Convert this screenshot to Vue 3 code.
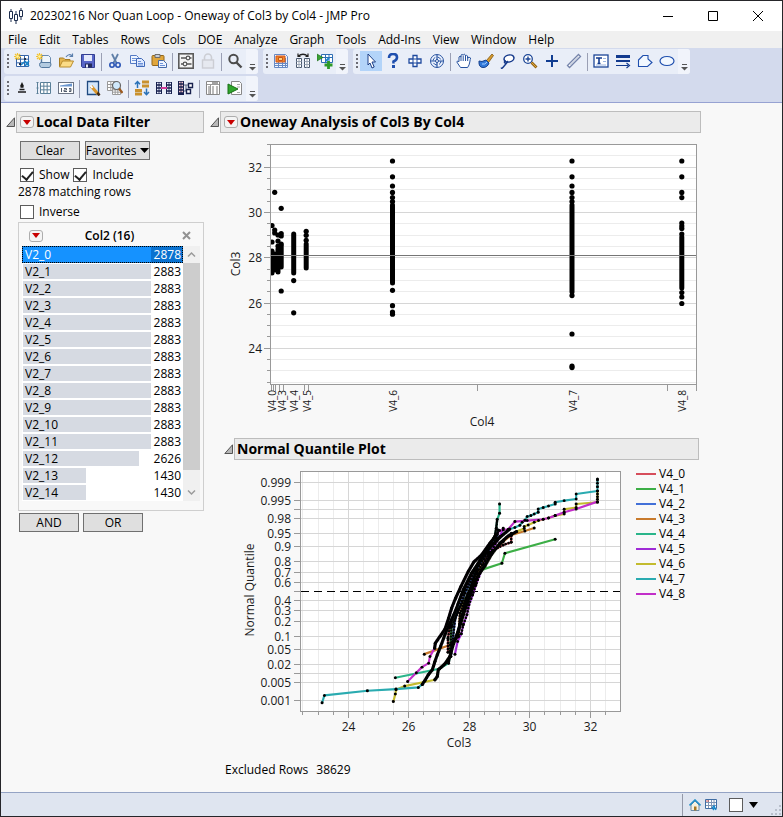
<script setup>
import { ref } from 'vue'

const menus = ['File', 'Edit', 'Tables', 'Rows', 'Cols', 'DOE', 'Analyze', 'Graph', 'Tools', 'Add-Ins', 'View', 'Window', 'Help']

const grid = (x, y, w, h, c) =>
  `<path d="M${x} ${y}h${w}v${h}h-${w}z" fill="#fff" stroke="${c}"/><path d="M${x} ${y + h / 3}h${w}M${x} ${y + (2 * h) / 3}h${w}M${x + w / 3} ${y}v${h}M${x + (2 * w) / 3} ${y}v${h}" stroke="${c}" fill="none"/>`
const spark = '<path d="M3.500 0v7M0 3.500h7M1 1l5 5M6 1l-5 5" stroke="#f2c230" stroke-width="1.200"/><circle cx="3.500" cy="3.500" r="1.300" fill="#fff3a0"/>'

const icons = {
  newTable: grid(2.5, 2.5, 12, 11, '#3565a8') + '<path d="M11 8l4 5M15 8l-4 5M7 12l3-3" stroke="#1583c9" stroke-width="1.600"/><path d="M5 10h2v2H5zM10 5h2v2h-2z" fill="#20304a"/>' + spark,
  newScript: '<path d="M5.500 2.500h7l2 2v8h-9z" fill="#eef5fb" stroke="#6a8cb0"/><path d="M3.500 11.500q0-2 2-2h9q1.500 2.500-1 5H5.500q-2-.5-2-3z" fill="#b3cbe0" stroke="#54799f"/><path d="M5.500 3v7" stroke="#54799f" stroke-width="1.400"/>' + spark,
  open: '<path d="M1.500 13.500V5h4l1.500 1.500h5v7z" fill="#e5b650" stroke="#a77e25"/><path d="M1.500 14l3-6h11l-3 6z" fill="#fbdc86" stroke="#b88c2c"/><path d="M8 4q3-4 6-1M14.500 .5v3h-3" fill="none" stroke="#5a7fae" stroke-width="1.200"/>',
  save: '<path d="M1.500 1.500h13v13h-12l-1-1z" fill="#5866c8" stroke="#343f92"/><path d="M4 2h8v6H4z" fill="#e4e9fb"/><path d="M5 10.500h7v4H5z" fill="#222a5c"/><path d="M6 11.500h2v3H6z" fill="#e8ebfa"/>',
  cut: '<path d="M5 1l4.500 9M11 1L6.500 10" stroke="#5f7fa8" stroke-width="1.800"/><circle cx="5" cy="12" r="2.200" fill="none" stroke="#2a55b5" stroke-width="1.600"/><circle cx="11" cy="12" r="2.200" fill="none" stroke="#2a55b5" stroke-width="1.600"/>',
  copy: '<path d="M1.500 2.500h6l2 2v6h-8z" fill="#eef5ff" stroke="#5379c4"/><path d="M3 5.500h4M3 7.500h4" stroke="#6d92d8"/><path d="M7.500 5.500h5l3 3v5h-8z" fill="#dfeaff" stroke="#3f68b8"/><path d="M9 8.500h3M9 10.500h5M9 12h5" stroke="#6d92d8"/>',
  paste: '<rect x="1" y="2.500" width="12" height="10" rx="1" fill="#e0a63c" stroke="#93661a"/><path d="M4 1.500h5v3H4z" fill="#c9ced8" stroke="#6d6d6d"/><path d="M7.500 7.500h5l3 3v4h-8z" fill="#eef4ff" stroke="#456aa8"/><path d="M9 10.500h3M9 12.500h5" stroke="#6d92d8"/>',
  prefs: '<rect x=".8" y=".8" width="14.400" height="14.400" fill="#f4f4f4" stroke="#5b5b5b" stroke-width="1.600"/><path d="M3 5h5M12 5h1.500M3 11h2M9 11h4.500" stroke="#555" stroke-width="1.400"/><circle cx="10" cy="5" r="1.800" fill="none" stroke="#555" stroke-width="1.200"/><circle cx="7" cy="11" r="1.800" fill="none" stroke="#555" stroke-width="1.200"/>',
  lock: '<path d="M4.500 7V4.500a3.500 3.500 0 0 1 7 0V7" fill="none" stroke="#ccced4" stroke-width="1.600"/><rect x="2.500" y="7" width="11" height="8" fill="#e6e9f0" stroke="#ccced4" stroke-width="1.400"/>',
  search: '<circle cx="6.500" cy="6" r="4.200" fill="none" stroke="#4c4c4c" stroke-width="2"/><path d="M9.500 9.500l5 5" stroke="#4c4c4c" stroke-width="2.400"/>',
  dist: '<path d="M1.500 1.500h11l2 2v11h-13z" fill="#f2f6fd" stroke="#6689c4"/><path d="M2 10.500h12M2 12.500h12M5.500 9v5M9.500 9v5M12.500 5v9" stroke="#6689c4"/><path d="M3 3h9v6H3z" fill="#f08a24" stroke="#d3541d"/><path d="M5.500 4.500h4v3h-4z" fill="#fdd27a" stroke="#c8501c"/>',
  compare: '<path d="M1.500 5.500h5v9h-5zM9.500 5.500h5v9h-5z" fill="#fff" stroke="#49586e"/><path d="M1.500 8.500h5M1.500 11.500h5M4 6v9M9.500 8.500h5M9.500 11.500h5M12 6v9" stroke="#9aa5b5"/><path d="M3 3.500Q8-1 13 3.500M3 .5v3h2.500M13 .5v3h-2.500" stroke="#222" stroke-width="1.200" fill="none"/>',
  addRun: '<path d="M4.500 1.500h11v8h-11z" fill="#fff" stroke="#2f6fb5"/><path d="M5 4.500h10M8.500 2v7M12 2v7" stroke="#2f6fb5"/><path d="M9 8l3-3" stroke="#1a86d0" stroke-width="2"/><path d="M0 1l6 3.500L0 8z" fill="#3aa035" stroke="#1f6d1b" stroke-width=".6"/><path d="M11.500 8v8M7.500 12h8" stroke="#2d9a27" stroke-width="2.800"/>',
  pointer: '<path d="M5 1l7.500 8H9l2.200 5-2.200 1-2-5L5 12z" fill="#fff" stroke="#1c3f86"/>',
  help: '<path d="M4 5q0-4 4-4t4 3.500Q12 7 8.500 8.500v2" fill="none" stroke="#1f4fae" stroke-width="2.600"/><rect x="7" y="12" width="3" height="3" fill="#1f4fae"/>',
  cross: '<path d="M6 2.500h4V6h4v4h-4v3.500H6V10H2V6h4z" fill="#fff" stroke="#1f4a9e" stroke-width="1.300"/><path d="M6 6h4v4H6z" fill="#fff" stroke="#1f4a9e"/>',
  target: '<circle cx="8" cy="8" r="6.500" fill="#eef4ff" stroke="#27529f"/><circle cx="8" cy="8" r="4" fill="none" stroke="#27529f" stroke-dasharray="4 2.300"/><path d="M8 2v12M2 8h12" stroke="#27529f" stroke-width="1.200"/><circle cx="8" cy="8" r="1.500" fill="#fff" stroke="#27529f"/>',
  hand: '<path d="M4.500 14.500L.8 9q.4-1.800 2.200-.4V4q1-1.500 2 0V2.200q1-1.500 2.200 0V2q1-1.600 2.200 0v1q1-1.300 2.200 0v2q1.600-1.300 3 0-.4 1-.8 4t-2.200 5.500z" fill="#fff" stroke="#27529f"/><path d="M5 3.500V8M7.200 3v5M9.500 3v5M11.700 4v4" stroke="#27529f"/>',
  brush: '<path d="M8 8l6-7 1.500 1.500-5 7z" fill="#d79b2e" stroke="#7f5712" stroke-width=".8"/><path d="M1 8l3 .5L8 7l3 3q-1.500 4.500-6 4.500T1 8z" fill="#2f77d8" stroke="#153f8c"/><path d="M4 11q3 1 5-2" stroke="#a9d0ff" fill="none"/>',
  lasso: '<ellipse cx="9" cy="5.500" rx="5" ry="3.500" transform="rotate(-14 9 5.500)" fill="#fff" stroke="#163a8c" stroke-width="1.500"/><path d="M6 8q-2 0-1.500 1.500T7 9t-2 3-3.500 2.500" fill="none" stroke="#163a8c" stroke-width="1.400"/>',
  magnify: '<circle cx="6" cy="6" r="4.300" fill="#fff" stroke="#1c4697" stroke-width="1.300"/><path d="M6 3.500v5M3.500 6h5" stroke="#1c4697" stroke-width="1.400"/><path d="M9.500 9.500l5 5" stroke="#966514" stroke-width="2.800"/><path d="M9.500 9.500l4.500 4.500" stroke="#e0aa3e"/>',
  plus: '<path d="M8 2v12M2 8h12" stroke="#113d91" stroke-width="2"/>',
  ruler: '<path d="M1.500 12.500L12.500 1.500l2 2L3.500 14.500z" fill="#fff" stroke="#7584ab" stroke-width="1.300"/><path d="M4.500 12L13 3.500" stroke="#a4b0cc"/>',
  textBox: '<rect x="1" y="2" width="14" height="12" fill="#fff" stroke="#1c4697" stroke-width="1.300"/><path d="M3 5h6M6 5v5.500M4.500 10.500h3" stroke="#123a8e" stroke-width="1.600"/><path d="M10 5.500h3M10 8.500h3M3 12h10" stroke="#9bb5e0"/>',
  lines: '<path d="M1 3.500h14" stroke="#123a8e" stroke-width="3"/><path d="M1 8h14" stroke="#123a8e" stroke-width="2"/><path d="M1 12.500h12M11.500 10l3 2.500-3 2.500" stroke="#123a8e" fill="none" stroke-width="1.200"/>',
  polygon: '<path d="M1.500 7l4.500-4.500h5V6l4 3.500-4.500 4h-9z" fill="#f2f8ff" stroke="#1f4fae" stroke-width="1.100"/>',
  ellipse: '<ellipse cx="8" cy="8" rx="7" ry="4.500" fill="#f2f8ff" stroke="#1f4fae" stroke-width="1.200"/>',
  stack: '<path d="M8 3.500l1 2H7zM6.500 7h3M5.500 9.500h5M4 12h8" stroke="#1c1c1c" stroke-width="1.300" fill="#1c1c1c"/>',
  rowsTable: grid(4.5, 2.5, 10, 11, '#5a8098') + '<path d="M1.500 2v12M.5 2.500h2M.5 8h2M.5 13.500h2" stroke="#5a8098"/>',
  numbers: '<rect x=".5" y="2.500" width="15" height="11" fill="#fff" stroke="#6b7484"/><path d="M2 5.500L14 3.500v3H2z" fill="#6a96cf"/><path d="M3.500 8v4M6 8.500h2.500v1.500H6v1.500h3M11 8.500h2v3h-2M11 10h2" stroke="#525c6c" fill="none"/>',
  editSheet: '<path d="M2.500 1.500h11v13h-11z" fill="#d2e6fb" stroke="#1f4a80" stroke-width="1.300"/><path d="M6 6l7 8" stroke="#d9962c" stroke-width="3.200"/><path d="M5.500 5.500l2 2.500" stroke="#fff" stroke-width="2"/><path d="M12.500 12.500l2 3" stroke="#422a10" stroke-width="2.400"/>',
  findTable: grid(.5, 1.5, 10, 9, '#999') + grid(5.5, 7.5, 8, 7, '#999') + '<circle cx="9.500" cy="5.500" r="4" fill="#cfe8fb" stroke="#666" stroke-width="1.200"/><path d="M12 8.500l3.500 4.500" stroke="#9c5a20" stroke-width="2.200"/>',
  sort: '<path d="M8 2h7M8 6h7M1 10.500h7M1 14h7" stroke="#c9912d" stroke-width="2.800"/><path d="M3.500 8V2M1 4.200l2.500-2.700L6 4.200M12.500 8.500V14M10 12l2.500 2.700L15 12" stroke="#2a72b8" stroke-width="1.500" fill="none"/>',
  join: '<path d="M0 2h6v12H0zM10 2h6v12h-6z" fill="#17204e"/><path d="M1 3.500h4M1 6.500h4M1 9.500h4M1 12.500h4M11 3.500h4M11 6.500h4M11 9.500h4M11 12.500h4" stroke="#e7ebfa" stroke-width="1.600" stroke-dasharray="1.600 .8"/><path d="M5 8h6" stroke="#d13a9a" stroke-width="2"/>',
  split: '<path d="M0 1h6v14H0z" fill="#17204e"/><path d="M1 2.500h4M1 5.500h4M1 8.500h4M1 11.500h4" stroke="#f1c3ca" stroke-width="1.600" stroke-dasharray="1.600 .8"/><path d="M6 5h4M6 11h4M8 5v6" stroke="#5b6480"/><path d="M10.500 3.500h4v4h-4zM8.500 9.500h4v4h-4z" fill="#fff" stroke="#17204e" stroke-width="1.400"/>',
  summary: '<path d="M1.500 1.500h13v13h-13z" fill="#fff" stroke="#888"/><path d="M2 4.500h12M5.500 5v9" stroke="#999"/><path d="M7 3h6" stroke="#444"/><path d="M3 7h2M7 7h2M11 7h2M3 9h2M7 9h2M11 9h2M3 11h2M7 11h2M11 11h2M3 13h2M7 13h2M11 13h2" stroke="#777"/>',
  runScript: '<path d="M4.500 1.500h8l2 2v11h-10z" fill="#fdfdfd" stroke="#888"/><path d="M10 4.500h3M10 7h3M10 12.500h3" stroke="#aaa"/><path d="M1 4l10 5-10 5z" fill="#30a52c" stroke="#187016"/>'
}

const S = '|'
const toolRows = [
  [
    ['newTable', 'newScript', 'open', 'save', S, 'cut', 'copy', 'paste', S, 'prefs', 'lock', S, 'search'],
    ['dist', 'compare', 'addRun'],
    ['pointer', 'help', 'cross', 'target', S, 'hand', 'brush', 'lasso', 'magnify', 'plus', 'ruler', S, 'textBox', 'lines', 'polygon', 'ellipse']
  ],
  [
    ['stack', 'rowsTable', 'numbers', S, 'editSheet', 'findTable', S, 'sort', 'join', 'split', S, 'summary', 'runScript']
  ]
]

const show = ref(true)
const include = ref(true)
const inverse = ref(false)
const mark = ref(false)
const selected = ref(0)
const levels = [2878, 2883, 2883, 2883, 2883, 2883, 2883, 2883, 2883, 2883, 2883, 2883, 2626, 1430, 1430].map((n, i) => ({
  name: 'V2_' + i,
  n,
  width: Math.floor((n / 2883) * 128.3) + 'px'
}))

/* Oneway chart */
const oneY = v => 257.7 - (v - 28) * 22.65
const oneMajor = [32, 30, 28, 26, 24]
const oneMinor = []
for (let v = 22.5; v < 33; v += 0.5) if (!oneMajor.includes(v)) oneMinor.push(v)
const oneTicks = [271.5, 273.5, 275.5, 279.5, 283.5, 304.5, 308.5, 477.5, 667.5, 696.5]
const oneLabels = [['V4_0', 272], ['V4_3', 282], ['V4_4', 294], ['V4_5', 307], ['V4_6', 393], ['V4_7', 573], ['V4_8', 682]]
// Each group: x centre, single marker positions, [from, to] runs of packed markers
const groups = [
  [272, [225.5, 242], [[251, 273]]],
  [274.7, [192.3, 230, 233], [[254, 270]]],
  [278, [235, 241, 246], [[249, 272]]],
  [281.2, [208.3, 233.5, 236, 244, 291], [[246, 267]]],
  [293.7, [280.6, 312.8], [[234, 273]]],
  [306.2, [231.3, 235.3, 240.3], [[244, 268]]],
  [392.5, [161, 176.8, 186, 192.4, 197.5, 201.5, 290.3, 305.7, 312, 314.2], [[205, 283]]],
  [572, [161, 176.8, 186, 192.4, 197.5, 201.5, 295.6, 334, 366, 367.6], [[205, 292]]],
  [681.8, [161, 176.8, 192.4, 197.6, 223, 226, 228.5, 234, 292.5, 297, 303.5], [[237, 288]]]
]

/* Normal quantile chart */
const nqX = [[24, 348.5], [26, 408.5], [28, 469.5], [30, 529.5], [32, 590.5]]
const nqMinor = [302.5, 318.5, 333.5, 363.5, 378.5, 393.5, 423.5, 439.5, 454.5, 484.5, 499.5, 515.5, 544.5, 560.5, 575.5, 605.5]
const nqY = [
  ['0.999', 482.5], ['0.995', 500.5], ['', 509.5], ['0.98', 518.5], ['0.95', 533.5], ['0.9', 546.5], ['0.8', 561.5], ['0.7', 572.5], ['0.6', 582.5],
  ['0.4', 600.5], ['0.3', 610.5], ['0.2', 621.5], ['0.1', 636.5], ['0.05', 649.5], ['0.02', 664.5], ['', 673.5], ['0.005', 682.5], ['0.001', 700.5]
]
// Trace vertices; `dense` is the index range drawn with packed markers every `gap` units
const series = [
  { name: 'V4_0', color: '#d64d5b', gap: 9, dense: [0, 9], pts: [[144, 577], [144, 535], [150, 500], [175, 430], [195, 390], [225, 330], [265, 280], [310, 255], [334, 247], [334, 220]] },
  { name: 'V4_1', color: '#3cae46', gap: 9, dense: [0, 4], pts: [[150, 575], [155, 500], [175, 450], [215, 385], [245, 330], [306, 310], [315, 280], [466, 238]] },
  { name: 'V4_2', color: '#4270d8', gap: 9, dense: [0, 7], pts: [[153, 590], [158, 545], [165, 480], [195, 400], [230, 330], [270, 265], [290, 235], [295, 210]] },
  { name: 'V4_3', color: '#c87a2c', gap: 8, dense: [1, 7], pts: [[73, 583], [152, 555], [176, 530], [180, 460], [205, 400], [230, 340], [270, 280], [310, 245], [335, 225], [375, 213], [403, 204]] },
  { name: 'V4_4', color: '#2ab58a', gap: 5, dense: [2, 13], pts: [[-14, 654], [118, 627], [146, 610], [150, 590], [157, 560], [175, 510], [190, 450], [205, 400], [220, 360], [235, 310], [262, 265], [285, 228], [289, 205], [292, 178], [299, 160], [299, 132]] },
  { name: 'V4_5', color: '#a02bd6', gap: 10, dense: [2, 10], pts: [[165, 583], [173, 545], [184, 522], [190, 495], [201, 465], [207, 435], [218, 405], [228, 375], [245, 330], [270, 280], [300, 230], [310, 205]] },
  { name: 'V4_6', color: '#c3bb2e', gap: 2, dense: [4, 19], pts: [[-20, 725], [-14, 703], [-12, 690], [14, 679], [105, 660], [112, 650], [115, 630], [135, 612], [150, 590], [158, 560], [175, 515], [190, 465], [205, 420], [220, 380], [235, 345], [255, 318], [275, 283], [300, 250], [325, 228], [350, 215], [373, 206], [373, 200], [385, 195], [403, 187], [416, 182], [430, 178], [446, 174], [466, 167], [493, 162], [493, 148], [529, 143], [529, 132], [593, 127], [593, 118], [593, 110], [593, 102], [593, 93]] },
  { name: 'V4_7', color: '#2aabb0', gap: 2, dense: [5, 20], pts: [[-234, 729], [-227, 707], [-98, 693], [-12, 688], [55, 683], [67, 674], [75, 662], [85, 645], [97, 630], [105, 605], [112, 585], [122, 560], [135, 525], [150, 490], [168, 450], [190, 390], [215, 340], [245, 295], [270, 262], [300, 232], [330, 207], [345, 203], [360, 196], [367, 187], [375, 181], [382, 170], [393, 167], [403, 162], [415, 157], [415, 147], [430, 143], [446, 138], [466, 132], [466, 127], [493, 122], [529, 117], [529, 102], [593, 93], [593, 80], [593, 70], [593, 60], [593, 57]] },
  { name: 'V4_8', color: '#c22fc9', gap: 3, dense: [5, 17], pts: [[23, 665], [49, 639], [66, 622], [86, 610], [90, 590], [104, 565], [106, 550], [120, 530], [135, 508], [146, 475], [155, 445], [167, 415], [183, 380], [205, 335], [222, 306], [245, 285], [270, 250], [292, 222], [299, 212], [310, 210], [325, 208], [345, 185], [382, 182], [430, 178], [446, 174], [466, 167], [493, 157], [529, 147], [593, 125]] }
]
const line = pts => pts.map(p => p.join(',')).join(' ')
</script>

<template>
  <div class="window">
    <header class="titlebar">
      <svg class="logo" width="16" height="16" viewBox="0 0 16 16">
        <path d="M3 1v13M8 3v13M13 0v12" stroke="#1d2d4d" />
        <path d="M1.500 3.500h3v7h-3zM6.500 6.500h3v6h-3zM11.500 2.500h3v6h-3z" fill="#fff" stroke="#1d2d4d" />
      </svg>
      <h1>20230216 Nor Quan Loop - Oneway of Col3 by Col4 - JMP Pro</h1>
      <div class="controls">
        <button aria-label="Minimize"><svg width="12" height="12"><path d="M1 6.500h10" stroke="#000" /></svg></button>
        <button aria-label="Maximize"><svg width="12" height="12"><path d="M1.500 1.500h9v9h-9z" fill="none" stroke="#000" /></svg></button>
        <button aria-label="Close"><svg width="12" height="12"><path d="M1 1l10 10M11 1L1 11" stroke="#000" /></svg></button>
      </div>
    </header>

    <nav class="menubar">
      <button v-for="m in menus" :key="m">{{ m }}</button>
    </nav>

    <div class="toolbars">
      <div v-for="(row, r) in toolRows" :key="r" class="toolrow">
        <div v-for="(group, g) in row" :key="g" class="toolgroup">
          <span class="grip"></span>
          <template v-for="(t, i) in group" :key="i">
            <span v-if="t === S" class="sep"></span>
            <button v-else class="tool" :class="{ active: t === 'pointer' }" :aria-label="t">
              <svg width="16" height="16" viewBox="0 0 16 16" fill="none" v-html="icons[t]"></svg>
            </button>
          </template>
          <button class="overflow" aria-label="More buttons">
            <svg width="7" height="7" viewBox="0 0 7 7"><path d="M1 .5h5" stroke="#555" /><path d="M0 3h7L3.500 6.500z" fill="#555" /></svg>
          </button>
        </div>
      </div>
    </div>

    <main class="content">
      <aside class="filter">
        <div class="outline">
          <svg class="disclose" width="10" height="10" viewBox="0 0 10 10"><path d="M8.500 .8v8.700H.8z" fill="#b8b8b8" stroke="#555" /></svg>
          <div class="heading">
            <button class="red" aria-label="Local Data Filter options"><svg width="8" height="5"><path d="M0 0h8L4 5z" fill="#c80000" /></svg></button>
            <h2>Local Data Filter</h2>
          </div>
        </div>
        <div class="filter-body">
          <div class="btnrow">
            <button class="btn clear">Clear</button>
            <button class="btn fav">Favorites <svg width="9" height="5"><path d="M0 0h9L4.500 5z" fill="#000" /></svg></button>
          </div>
          <div class="checks">
            <label><input v-model="show" type="checkbox" />Show</label>
            <label><input v-model="include" type="checkbox" />Include</label>
          </div>
          <p class="match">2878 matching rows</p>
          <div class="checks inverse">
            <label><input v-model="inverse" type="checkbox" />Inverse</label>
          </div>
          <section class="panel">
            <div class="panel-head">
              <button class="red" aria-label="Col2 options"><svg width="8" height="5"><path d="M0 0h8L4 5z" fill="#c80000" /></svg></button>
              <h3>Col2 (16)</h3>
              <button class="x" aria-label="Remove"><svg width="9" height="9"><path d="M1 1l7 7M8 1L1 8" stroke="#929292" stroke-width="2" /></svg></button>
            </div>
            <div class="listwrap">
              <ul class="levels">
                <li v-for="(l, i) in levels" :key="l.name">
                  <button :class="{ on: selected === i }" @click="selected = i">
                    <span class="bar" :style="{ width: l.width }"></span>
                    <span class="name">{{ l.name }}</span>
                    <span class="count">{{ l.n }}</span>
                  </button>
                </li>
              </ul>
              <div class="scroll">
                <svg width="17" height="17"><path d="M5 10.500l3.500-3.500 3.500 3.500" fill="none" stroke="#9a9a9a" stroke-width="1.500" /></svg>
                <span class="thumb"></span>
                <svg width="17" height="17"><path d="M5 6.500l3.500 3.500 3.500-3.500" fill="none" stroke="#9a9a9a" stroke-width="1.500" /></svg>
              </div>
            </div>
          </section>
          <div class="btnrow logic">
            <button class="btn">AND</button>
            <button class="btn">OR</button>
          </div>
        </div>
      </aside>

      <section class="report">
        <div class="outline">
          <svg class="disclose" width="10" height="10" viewBox="0 0 10 10"><path d="M8.500 .8v8.700H.8z" fill="#b8b8b8" stroke="#555" /></svg>
          <div class="heading">
            <button class="red" aria-label="Oneway options"><svg width="8" height="5"><path d="M0 0h8L4 5z" fill="#c80000" /></svg></button>
            <h2>Oneway Analysis of Col3 By Col4</h2>
          </div>
        </div>

        <svg class="chart" width="480" height="304" viewBox="220 133 480 304">
          <defs>
            <clipPath id="one"><rect x="270" y="144" width="427" height="241" /></clipPath>
          </defs>
          <rect x="270" y="144" width="427" height="241" fill="#fff" />
          <path v-for="v in oneMinor" :key="v" :d="`M271 ${Math.floor(oneY(v)) + 0.5}H696`" stroke="#ececec" />
          <path v-for="v in oneMajor" :key="v" :d="`M271 ${Math.floor(oneY(v)) + 0.5}H696`" stroke="#d6d6d6" />
          <path v-for="v in oneMinor" :key="'t' + v" :d="`M267 ${Math.floor(oneY(v)) + 0.5}H270`" stroke="#999" />
          <path v-for="v in oneMajor" :key="'t' + v" :d="`M264 ${Math.floor(oneY(v)) + 0.5}H270`" stroke="#999" />
          <path d="M267 144.500h3" stroke="#999" />
          <path v-for="x in oneTicks" :key="x" :d="`M${x} 385v6`" stroke="#999" />
          <g clip-path="url(#one)">
            <g v-for="g in groups" :key="g[0]">
              <circle v-for="y in g[1]" :key="y" :cx="g[0]" :cy="y" r="2.600" />
              <path v-for="s in g[2]" :key="s[0]" :d="`M${g[0]} ${s[0]}V${s[1]}`" stroke="#000" stroke-width="5" stroke-linecap="round" />
            </g>
          </g>
          <path d="M271 255.500H696" stroke="#757575" />
          <rect x="270.500" y="144.500" width="426" height="240" fill="none" stroke="#999" />
          <text v-for="v in oneMajor" :key="'l' + v" x="262" :y="Math.floor(oneY(v)) + 5" class="end">{{ v }}</text>
          <text v-for="l in oneLabels" :key="l[0]" class="end tiny" :transform="`translate(${l[1] + 4} 390) rotate(-90)`">{{ l[0] }}</text>
          <text class="mid" transform="translate(240 264) rotate(-90)">Col3</text>
          <text class="mid" x="482" y="426">Col4</text>
        </svg>

        <div class="nested">
          <div class="outline">
            <svg class="disclose" width="10" height="10" viewBox="0 0 10 10"><path d="M8.500 .8v8.700H.8z" fill="#b8b8b8" stroke="#555" /></svg>
            <div class="heading plain"><h2>Normal Quantile Plot</h2></div>
          </div>
          <div class="nq">
            <svg class="chart" width="396" height="286" viewBox="230 466 396 286">
              <rect x="300" y="471" width="321" height="241" fill="#fff" />
              <path v-for="x in nqMinor" :key="x" :d="`M${x} 472V711`" stroke="#ececec" />
              <path v-for="x in nqX" :key="x[0]" :d="`M${x[1]} 472V711`" stroke="#d6d6d6" />
              <path v-for="y in nqY" :key="y[1]" :d="`M301 ${y[1]}H620`" stroke="#d6d6d6" />
              <path v-for="x in nqMinor" :key="'t' + x" :d="`M${x} 712v3`" stroke="#999" />
              <path v-for="x in nqX" :key="'t' + x[0]" :d="`M${x[1]} 712v6`" stroke="#999" />
              <path v-for="y in nqY" :key="'t' + y[1]" :d="`M294 ${y[1]}H300`" stroke="#999" />
              <path d="M294 591.500h6" stroke="#999" />
              <path d="M301 591.500H620" stroke="#000" stroke-dasharray="8 5" />
              <g transform="translate(400 460) scale(0.333)" fill="none" stroke-linejoin="round" stroke-linecap="round">
                <polyline v-for="s in series" :key="s.name" :points="line(s.pts)" :stroke="s.color" stroke-width="6.500" />
                <g v-for="s in series" :key="'m' + s.name">
                  <polyline :points="line(s.pts.slice(s.dense[0], s.dense[1] + 1))" stroke="#000" :stroke-width="s.gap < 4 ? 10 : 8" :stroke-dasharray="'0 ' + s.gap" />
                  <circle v-for="(p, i) in s.pts" :key="i" :cx="p[0]" :cy="p[1]" r="4.500" fill="#000" />
                </g>
              </g>
              <rect x="300.500" y="471.500" width="320" height="240" fill="none" stroke="#999" />
              <text v-for="y in nqY" :key="'l' + y[1]" x="291" :y="y[1] + 4.500" class="end">{{ y[0] }}</text>
              <text v-for="x in nqX" :key="'l' + x[0]" :x="x[1]" y="731" class="mid">{{ x[0] }}</text>
              <text class="mid" transform="translate(254 590) rotate(-90)">Normal Quantile</text>
              <text class="mid" x="459" y="747">Col3</text>
            </svg>
            <ul class="legend">
              <li v-for="s in series" :key="s.name">
                <svg width="20" height="2"><path d="M0 1h20" :stroke="s.color" stroke-width="2" /></svg>{{ s.name }}
              </li>
            </ul>
          </div>
        </div>
        <p class="excluded"><span>Excluded Rows</span><span>38629</span></p>
      </section>
    </main>

    <footer class="status">
      <div class="status-tools">
        <button class="home" aria-label="Home window">
          <svg width="12" height="12" viewBox="0 0 12 12"><path d="M2 6v5.500h8V6L6 2z" fill="#f6f1df" stroke="#6c8aa6" /><path d="M5 7.500h2.500v4H5z" fill="#a8761f" /><path d="M.5 6.500L6 1l5.500 5.500" fill="none" stroke="#2591c9" stroke-width="1.600" /></svg>
        </button>
        <button class="table" aria-label="Data table">
          <svg width="12" height="12" viewBox="0 0 12 12"><path d="M.5 .5h11v9H.5z" fill="#fff" stroke="#3f6da3" /><path d="M1 3.500h10M1 6.500h10M3.500 1v8M6.500 1v8M9 1v8" stroke="#7f95b5" fill="none" /><path d="M1 2h3" stroke="#d05050" /><path d="M7 9l2-2 2 4M8 11l2-3" stroke="#1688cc" stroke-width="1.400" fill="none" /></svg>
        </button>
        <input v-model="mark" type="checkbox" aria-label="Window mark" />
        <button class="drop" aria-label="Window list"><svg width="9" height="6"><path d="M0 0h9L4.500 6z" fill="#000" /></svg></button>
        <svg class="resize" width="12" height="12" viewBox="0 0 12 12"><path d="M9 1h2v2H9zM9 5h2v2H9zM9 9h2v2H9zM5 5h2v2H5zM5 9h2v2H5zM1 9h2v2H1z" fill="#b9c0cc" /></svg>
      </div>
    </footer>
  </div>
</template>

<style>
body {
  margin: 0;
  background: #f8f8f8;
}
</style>

<style scoped>
* {
  box-sizing: border-box;
}
.window {
  display: flex;
  flex-direction: column;
  min-height: 100vh;
  border: 1px solid #26262a;
  background: #f8f8f8;
  color: #000;
  font: 12px/16px "Open Sans", "Noto Sans", sans-serif;
}
button {
  margin: 0;
  padding: 0;
  border: 0;
  background: none;
  font: inherit;
  color: inherit;
}
svg {
  display: block;
  flex: none;
}
h1, h2, h3, p, ul {
  margin: 0;
  padding: 0;
  list-style: none;
}
.titlebar {
  display: flex;
  align-items: center;
  height: 30px;
  padding: 0 2px 0 7px;
  background: #fff;
}
.titlebar h1 {
  flex: 1;
  padding-left: 6px;
  font-size: 12px;
  font-weight: 400;
  white-space: nowrap;
}
.controls {
  display: flex;
}
.controls button {
  display: grid;
  place-items: center;
  width: 45px;
  height: 30px;
}
.menubar {
  display: flex;
  gap: 12px;
  height: 17px;
  padding-left: 7px;
  background: #f0f0f0;
}
.menubar button {
  line-height: 17px;
}
.toolbars {
  display: flex;
  flex-direction: column;
  gap: 2px;
  padding: 1px 3px;
  background: #d3daed;
  border-bottom: 1px solid #97a2d2;
}
.toolrow {
  display: flex;
  gap: 5px;
}
.toolgroup {
  display: flex;
  align-items: center;
  height: 25px;
  border-radius: 3px;
  background: #e9eef8;
}
.grip {
  width: 2px;
  height: 15px;
  margin: 0 2px 0 3px;
  background: repeating-linear-gradient(#6c6c74 0 2px, transparent 2px 4px);
}
.tool {
  display: grid;
  place-items: center;
  width: 22px;
  height: 20px;
  margin-bottom: 1px;
}
.tool.active {
  background: #b3d4f9;
}
.sep {
  width: 1px;
  height: 18px;
  margin: 0 2px;
  background: #9a9fb4;
}
.overflow {
  display: flex;
  align-items: flex-end;
  justify-content: center;
  width: 12px;
  height: 25px;
  padding-bottom: 3px;
  border-radius: 0 3px 3px 0;
  background: #f1f4fb;
}
.content {
  display: flex;
  flex: 1;
  align-items: flex-start;
  gap: 6px;
  padding: 8px 5px;
}
.filter {
  width: 198px;
}
.outline {
  display: flex;
  align-items: center;
}
.heading {
  display: flex;
  flex: 1;
  align-items: center;
  gap: 2px;
  height: 22px;
  padding-left: 3px;
  border: 1px solid #bdbdbd;
  background: #ebebeb;
}
.heading.plain {
  padding-left: 2px;
}
h2 {
  font-size: 14px;
  line-height: 20px;
  font-weight: 700;
  white-space: nowrap;
}
.red {
  display: grid;
  place-items: center;
  width: 14px;
  height: 12px;
  border: 1px solid #adadad;
  border-radius: 3px;
  background: #f4f4f4;
}
.filter-body {
  padding: 8px 0 0 12px;
}
.btnrow {
  display: flex;
  gap: 5px;
  padding-left: 2px;
}
.btn {
  display: flex;
  align-items: center;
  justify-content: center;
  gap: 4px;
  width: 60px;
  height: 19px;
  border: 1px solid #707070;
  background: #dfdfdf;
  line-height: 17px;
}
.fav {
  width: 65px;
}
.checks {
  display: flex;
  gap: 4px;
  padding: 7px 0 0 2px;
}
.checks label {
  display: flex;
  align-items: center;
  gap: 5px;
}
input[type="checkbox"] {
  appearance: none;
  display: grid;
  place-items: center;
  width: 14px;
  height: 14px;
  margin: 0;
  border: 1px solid #5c5c5c;
  background: #fff;
}
.checks input:checked::after {
  content: "";
  width: 5px;
  height: 9px;
  margin-top: -2px;
  border: solid #222;
  border-width: 0 2px 2px 0;
  transform: rotate(40deg);
}
.match {
  padding-top: 1px;
}
.checks.inverse {
  padding-top: 4px;
}
.panel {
  margin-top: 2px;
  padding: 0 3px 9px;
  border: 1px solid #cfcfcf;
}
.panel-head {
  display: flex;
  align-items: center;
  justify-content: space-between;
  height: 23px;
  padding: 2px 9px 0 7px;
}
h3 {
  padding-right: 6px;
  font-size: 12px;
  font-weight: 600;
}
.listwrap {
  display: flex;
}
.levels {
  flex: 1;
  background: #fff;
}
.levels button {
  display: grid;
  grid-template-columns: 1fr auto;
  align-items: center;
  width: 100%;
  height: 17px;
  padding: 1px 2px 1px 1px;
  line-height: 15px;
  text-align: left;
}
.levels .bar {
  grid-area: 1 / 1 / 2 / 3;
  height: 15px;
  background: #d6dae2;
}
.levels .name {
  grid-area: 1 / 1;
  padding-left: 2px;
}
.levels .count {
  grid-area: 1 / 2;
}
.levels .on {
  background: #0a72d0;
  color: #fff;
  outline: 1px dotted #000;
  outline-offset: -1px;
}
.levels .on .bar {
  background: #1592ff;
}
.scroll {
  display: flex;
  flex-direction: column;
  width: 17px;
  background: #f0f0f0;
}
.thumb {
  height: 207px;
  margin-bottom: auto;
  background: #cdcdcd;
}
.logic {
  padding: 2px 0 0 1px;
  gap: 4px;
}
.report {
  width: 491px;
}
.chart {
  margin-left: 10px;
}
.chart text {
  fill: #1a1a1a;
  font-size: 12px;
}
.chart .end {
  text-anchor: end;
}
.chart .mid {
  text-anchor: middle;
}
.chart .tiny {
  font-size: 10px;
}
.nested {
  padding: 1px 2px 0 14px;
}
.nq {
  display: flex;
  align-items: flex-start;
  padding-top: 6px;
}
.nq .chart {
  margin-left: 6px;
}
.legend {
  padding: 0 0 0 10px;
}
.legend li {
  display: flex;
  align-items: center;
  gap: 3px;
  height: 15px;
}
.excluded {
  display: flex;
  gap: 8px;
  padding: 10px 0 0 15px;
}
.status {
  display: flex;
  justify-content: flex-end;
  height: 24px;
  padding-top: 1px;
  border-top: 1px solid #94a3c4;
  background: #dfe5f0;
}
.status-tools {
  display: flex;
  align-items: center;
  padding-left: 6px;
  border-left: 1px solid #9499a8;
}
.status .table {
  margin: 0 12px 0 4px;
}
.status .drop {
  margin: 0 12px 0 6px;
}
.resize {
  align-self: flex-end;
}
</style>
